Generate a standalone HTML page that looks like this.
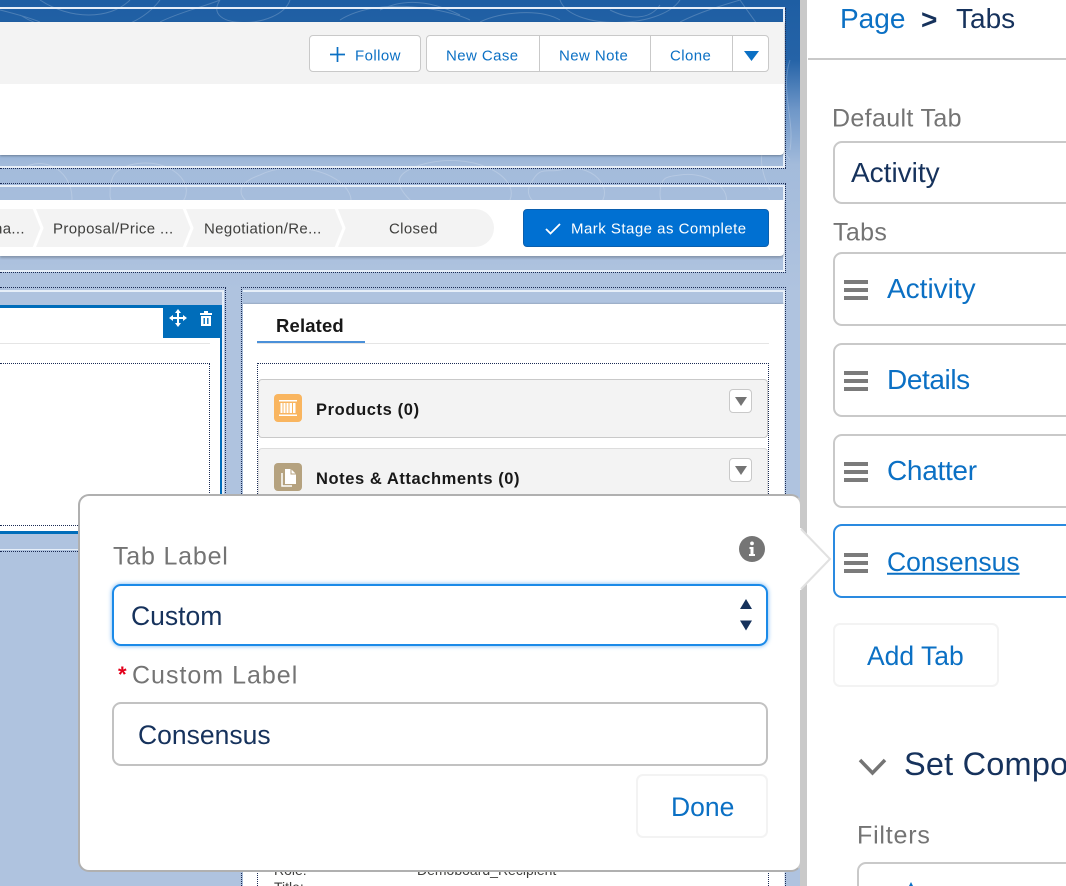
<!DOCTYPE html>
<html style="height:886px;overflow:hidden"><head><meta charset="utf-8"><style>
html,body{margin:0;padding:0}
body{width:1066px;height:886px;overflow:hidden;position:relative;background:#fff;font-family:"Liberation Sans",sans-serif}
#w{left:0;top:0;width:1066px;height:886px;overflow:hidden;background:#fff}
div,span,svg{position:absolute;box-sizing:border-box}
.t{white-space:nowrap;line-height:1;transform:translateY(-50%)}
.dh{height:0;border-top:1px dotted #1c2c55}
.dv{width:0;border-left:1px dotted #1c2c55}
.wl{background:#e6eef8}
.btn{color:#0b70c4;font-size:15px;letter-spacing:.42px}
.lab{color:#747474;font-size:25px;letter-spacing:.35px}
.navy{color:#16325c}
.blue{color:#0b70c4}
.tab{left:833px;width:300px;height:74px;border:2px solid #c9c9c9;border-radius:9px;background:#fff}
.ham{left:844px;width:24px;height:3.5px;background:#7b7b7b}
</style></head><body><div id="w">
<div style="left:0;top:0;width:800px;height:886px;background:linear-gradient(#1e5ea3 0,#2563a7 60px,#6f97c8 110px,#a3bbdb 165px,#afc3df 290px,#afc3df 886px)"></div>
<svg style="left:0;top:0" width="800" height="290" viewBox="0 0 800 290" fill="none" stroke="#fff" stroke-opacity=".2" stroke-width="1">
<path d="M20 170c30-20 60 10 50 40s-60 20-70 0M130 165c40-10 70 20 50 40s-70 10-70-10 5-25 20-30M260 175c30-15 80-5 90 20s-60 30-90 15-20-28 0-35M420 165c50-15 100 10 90 35s-80 20-100 0-10-28 10-35M560 170c40-10 60 30 30 40s-70-5-60-25 15-12 30-15M680 175c30-5 60 20 40 35s-60 5-60-15 8-18 20-20M40 0c30 20 70 20 90 0M20 15c40 25 110 25 140-15M220 0c-20 30 60 30 70 0M340 20c40-25 110-10 130 0M380 10c30-15 60-5 80 5M560 0c10 30 100 30 120 0M610 10c20 10 40 10 50-5M740 0c20 30 50 60 40 100s-30 50-10 90M770 40c20 30-10 80 20 120M790 60c-10 30 5 60 0 90M0 10c20 5 30 8 40 12M160 22c20-10 40-14 60-22M480 22c20-10 60-14 80-2M680 22c20-10 40-16 60-22"/>
</svg>
<div class="wl" style="left:0;top:7px;width:785px;height:2px"></div>
<div class="wl" style="left:783px;top:8px;width:2px;height:160px"></div>
<div class="dh" style="left:0;top:168px;width:786px"></div>
<div class="wl" style="left:0;top:166px;width:785px;height:2px"></div>
<div class="dv" style="left:785px;top:8px;height:160px"></div>
<div style="left:0;top:22px;width:784px;height:133px;background:#fff;box-shadow:0 1px 2px rgba(0,0,0,.3);border-radius:0 0 4px 0"></div>
<div style="left:0;top:22px;width:784px;height:62px;background:#f3f3f3"></div>
<div style="left:309px;top:35px;width:112px;height:37px;background:#fff;border:1px solid #c9c9c9;border-radius:4px"></div>
<svg style="left:330px;top:47px" width="15" height="15"><path d="M7.5 0v15M0 7.5h15" stroke="#0b70c4" stroke-width="1.7"/></svg>
<div class="t btn" style="left:355px;top:55.5px">Follow</div>
<div style="left:426px;top:35px;width:343px;height:37px;background:#fff;border:1px solid #c9c9c9;border-radius:4px"></div>
<div style="left:539px;top:36px;width:1px;height:35px;background:#c9c9c9"></div>
<div style="left:650px;top:36px;width:1px;height:35px;background:#c9c9c9"></div>
<div style="left:732px;top:36px;width:1px;height:35px;background:#c9c9c9"></div>
<div class="t btn" style="left:446px;top:55.5px">New Case</div>
<div class="t btn" style="left:559px;top:55.5px">New Note</div>
<div class="t btn" style="left:670px;top:55.5px">Clone</div>
<svg style="left:744px;top:51px" width="15" height="10"><path d="M0 0h15L7.5 10z" fill="#0b70c4"/></svg>

<div class="dh" style="left:0;top:183px;width:786px"></div>
<div class="dv" style="left:785px;top:183px;height:90px"></div>
<div class="wl" style="left:0;top:185px;width:785px;height:2px"></div>
<div class="wl" style="left:783px;top:186px;width:2px;height:86px"></div>
<div class="wl" style="left:0;top:270px;width:785px;height:2px"></div>
<div class="dh" style="left:0;top:272px;width:786px"></div>
<div style="left:0;top:200px;width:784px;height:56px;background:#fff;box-shadow:0 2px 2px rgba(0,0,0,.22);border-radius:0 0 4px 0"></div>
<svg style="left:0;top:209px" width="500" height="38"><path d="M0 0H475a19 19 0 0 1 0 38H0z" fill="#f3f3f3"/><path d="M34 -1l8 20-8 20M184 -1l8 20-8 20M336 -1l8 20-8 20" fill="none" stroke="#fff" stroke-width="3"/></svg>
<div class="t" style="left:-6px;top:229px;font-size:15px;color:#3e3e3c;letter-spacing:.35px">na...</div>
<div class="t" style="left:53px;top:229px;font-size:15px;color:#3e3e3c;letter-spacing:.35px">Proposal/Price ...</div>
<div class="t" style="left:204px;top:229px;font-size:15px;color:#3e3e3c;letter-spacing:.35px">Negotiation/Re...</div>
<div class="t" style="left:389px;top:229px;font-size:15px;color:#3e3e3c;letter-spacing:.35px">Closed</div>
<div style="left:523px;top:209px;width:246px;height:38px;background:#0070d2;border:1px solid #0b5fae;border-radius:4px"></div>
<svg style="left:545px;top:223px" width="16" height="12"><path d="M1 6l4.500 4.500L15 1" fill="none" stroke="#fff" stroke-width="1.8"/></svg>
<div class="t" style="left:571px;top:229px;font-size:15px;color:#fff;letter-spacing:.48px">Mark Stage as Complete</div>

<!-- left column -->
<div class="dh" style="left:0;top:287px;width:226px"></div>
<div class="wl" style="left:0;top:290px;width:224px;height:2px"></div>
<div class="wl" style="left:222px;top:290px;width:2px;height:260px"></div>
<div class="dv" style="left:225px;top:287px;height:262px"></div>
<div style="left:0;top:305px;width:222px;height:229px;background:#fff;border-top:3px solid #006dba;border-right:2px solid #006dba;border-bottom:3px solid #006dba"></div>
<div style="left:163px;top:306px;width:59px;height:32px;background:#006dba"></div>
<svg style="left:169px;top:309px" width="18" height="18" fill="#fff"><path d="M8 4h2v4h4V6l4 3-4 3v-2h-4v4h2l-3 4-3-4h2v-4H4v2L0 9l4-3v2h4z"/><path d="M9 0l3 4H6z"/></svg>
<svg style="left:199px;top:310px" width="14" height="17"><path d="M1 3h12v2H1zM5 1h4v2H5zM2 6h10v10H2z" fill="#fff"/><path d="M5.2 8v6M8.8 8v6" stroke="#006dba" stroke-width="1.4"/></svg>
<div style="left:0;top:343px;width:210px;height:1px;background:#e5e5e5"></div>
<div class="dh" style="left:0;top:363px;width:210px"></div>
<div class="dv" style="left:209px;top:363px;height:162px"></div>
<div class="dh" style="left:0;top:525px;width:210px"></div>
<div class="wl" style="left:0;top:549px;width:224px;height:1px"></div>
<div class="dh" style="left:0;top:551px;width:226px"></div>

<!-- right column -->
<div class="dh" style="left:241px;top:287px;width:545px"></div>
<div class="dv" style="left:241px;top:287px;height:599px"></div>
<div class="dv" style="left:785px;top:287px;height:599px"></div>
<div class="wl" style="left:243px;top:290px;width:542px;height:2px"></div>
<div class="wl" style="left:783px;top:290px;width:2px;height:596px"></div>
<div style="left:243px;top:304px;width:541px;height:582px;background:#fff;box-shadow:0 -1px 1px rgba(0,0,0,.12)"></div>
<div class="t" style="left:276px;top:326px;font-size:18.5px;font-weight:bold;color:#181818;letter-spacing:.15px">Related</div>
<div style="left:257px;top:343px;width:512px;height:1px;background:#e5e5e5"></div>
<div style="left:257px;top:341px;width:108px;height:2px;background:#4a90d9"></div>
<div class="dh" style="left:257px;top:363px;width:512px"></div>
<div class="dv" style="left:257px;top:363px;height:523px"></div>
<div class="dv" style="left:768px;top:363px;height:523px"></div>
<div style="left:258px;top:379px;width:510px;height:59px;background:#f3f3f3;border:1px solid #c9c9c9;border-radius:4px"></div>
<div style="left:258px;top:448px;width:510px;height:60px;background:#f3f3f3;border:1px solid #ddd;border-radius:4px"></div>
<div style="left:274px;top:394px;width:28px;height:28px;background:#f9b55f;border-radius:4px"></div>
<svg style="left:279px;top:400px" width="18" height="16"><path d="M0 .75h18M0 15.25h18" stroke="#fff" stroke-width="1.5"/><path d="M1.5 3h15v10h-15z" fill="#fff"/><path d="M4 3v10M7 3v10M10 3v10M13.500 3v10" stroke="#f9b55f" stroke-width="1"/></svg>
<div class="t" style="left:316px;top:410px;font-size:16.5px;font-weight:bold;color:#181818;letter-spacing:.62px">Products (0)</div>
<div style="left:274px;top:463px;width:28px;height:28px;background:#b5a27f;border-radius:4px"></div>
<svg style="left:280px;top:468px" width="17" height="19"><path d="M2 5v13h10" fill="none" stroke="#fff" stroke-width="1.500"/><path d="M5 1h6l5 5v10H5z" fill="#fff"/><path d="M11 1v5h5" fill="none" stroke="#b5a27f" stroke-width="1"/></svg>
<div class="t" style="left:316px;top:479px;font-size:16.5px;font-weight:bold;color:#181818;letter-spacing:.57px">Notes &amp; Attachments (0)</div>
<div style="left:729px;top:389px;width:23px;height:24px;background:#fff;border:1px solid #c9c9c9;border-radius:4px"></div>
<svg style="left:735px;top:397px" width="12" height="9"><path d="M0 0h12L6 9z" fill="#747474"/></svg>
<div style="left:729px;top:458px;width:23px;height:24px;background:#fff;border:1px solid #c9c9c9;border-radius:4px"></div>
<svg style="left:735px;top:466px" width="12" height="9"><path d="M0 0h12L6 9z" fill="#747474"/></svg>
<div class="t" style="left:274px;top:870px;font-size:14px;color:#3e3e3c">Role:</div>
<div class="t" style="left:417px;top:870px;font-size:14px;color:#3e3e3c">Demoboard_Recipient</div>
<div class="t" style="left:274px;top:887px;font-size:14px;color:#3e3e3c">Title:</div>

<!-- gray divider + right panel -->
<div style="left:800px;top:0;width:8px;height:886px;background:#c9c9c9"></div>
<div style="left:807px;top:0;width:259px;height:886px;background:#fff"></div>
<div style="left:808px;top:58px;width:258px;height:2px;background:#c9c9c9"></div>
<div class="t blue" style="left:840px;top:19px;font-size:28px">Page</div>
<div class="t navy" style="left:921px;top:20px;font-size:28px;font-weight:bold">&gt;</div>
<div class="t navy" style="left:956px;top:19px;font-size:28px">Tabs</div>
<div class="t lab" style="left:832px;top:119px">Default Tab</div>
<div style="left:833px;top:141px;width:300px;height:63px;border:2px solid #c9c9c9;border-radius:9px"></div>
<div class="t navy" style="left:851px;top:173px;font-size:28px">Activity</div>
<div class="t lab" style="left:833px;top:233px">Tabs</div>
<div class="tab" style="top:252px"></div>
<div class="tab" style="top:343px"></div>
<div class="tab" style="top:434px"></div>
<div class="tab" style="top:524px;border-color:#2a8ae0"></div>
<div class="ham" style="top:280px"></div><div class="ham" style="top:288px"></div><div class="ham" style="top:296px"></div>
<div class="ham" style="top:371px"></div><div class="ham" style="top:379px"></div><div class="ham" style="top:387px"></div>
<div class="ham" style="top:462px"></div><div class="ham" style="top:470px"></div><div class="ham" style="top:478px"></div>
<div class="ham" style="top:553px"></div><div class="ham" style="top:561px"></div><div class="ham" style="top:569px"></div>
<div class="t blue" style="left:887px;top:289px;font-size:28px">Activity</div>
<div class="t blue" style="left:887px;top:380px;font-size:28px;letter-spacing:-.4px">Details</div>
<div class="t blue" style="left:887px;top:471px;font-size:28px;letter-spacing:-.3px">Chatter</div>
<div class="t blue" style="left:887px;top:562px;font-size:26.5px;text-decoration:underline">Consensus</div>
<div style="left:833px;top:623px;width:166px;height:64px;border:2px solid #f3f3f3;border-radius:7px"></div>
<div class="t blue" style="left:867px;top:656px;font-size:26.5px">Add Tab</div>
<svg style="left:858px;top:758px" width="29" height="18"><path d="M2 2l12.500 13L27 2" fill="none" stroke="#747474" stroke-width="3.500"/></svg>
<div class="t navy" style="left:904px;top:764px;font-size:32.5px;letter-spacing:.2px">Set Compo</div>
<div class="t lab" style="left:857px;top:836px;letter-spacing:.8px">Filters</div>
<div style="left:857px;top:862px;width:300px;height:60px;border:2px solid #c9c9c9;border-radius:9px"></div>
<svg style="left:905px;top:882px" width="12" height="4"><path d="M4 4l2-4 2 4z" fill="#0b70c4"/></svg>

<!-- popover -->
<div style="left:78px;top:494px;width:724px;height:378px;background:#fff;border:2px solid #b0b0b0;border-right-color:#c9c9c9;border-radius:11px"></div>
<svg style="left:799px;top:527px" width="33" height="64"><path d="M0 1h2L31 32 2 63H0z" fill="#fff"/><path d="M2 2L31 32 2 62" fill="none" stroke="#e1e1e1" stroke-width="2"/></svg>
<div class="t lab" style="left:113px;top:557px;letter-spacing:.8px">Tab Label</div>
<svg style="left:739px;top:536px" width="26" height="26"><circle cx="13" cy="13" r="13" fill="#757575"/><path d="M13 5.500a1.900 1.900 0 1 1 0 3.800 1.900 1.900 0 0 1 0-3.800zM10.500 11h4v7h1.500v2h-6v-2h1.500v-5h-1z" fill="#fff"/></svg>
<div style="left:112px;top:584px;width:656px;height:62px;border:2px solid #1b8ae8;border-radius:9px;box-shadow:0 0 5px #6fb3f0;background:#fff"></div>
<div class="t navy" style="left:131px;top:616px;font-size:26.5px">Custom</div>
<svg style="left:740px;top:599px" width="12" height="32" fill="#16325c"><path d="M6 0L12 10H0zM0 21.500h12L6 31.500z"/></svg>
<div class="t" style="left:118px;top:675px;font-size:22px;font-weight:bold;color:#e3001b">*</div>
<div class="t lab" style="left:132px;top:676px;letter-spacing:1px">Custom Label</div>
<div style="left:112px;top:702px;width:656px;height:64px;border:2px solid #c2c2c2;border-radius:9px"></div>
<div class="t navy" style="left:138px;top:735px;font-size:26.5px">Consensus</div>
<div style="left:636px;top:774px;width:132px;height:64px;border:2px solid #f3f3f3;border-radius:7px"></div>
<div class="t blue" style="left:671px;top:807px;font-size:26.5px">Done</div>
</div></body></html>
